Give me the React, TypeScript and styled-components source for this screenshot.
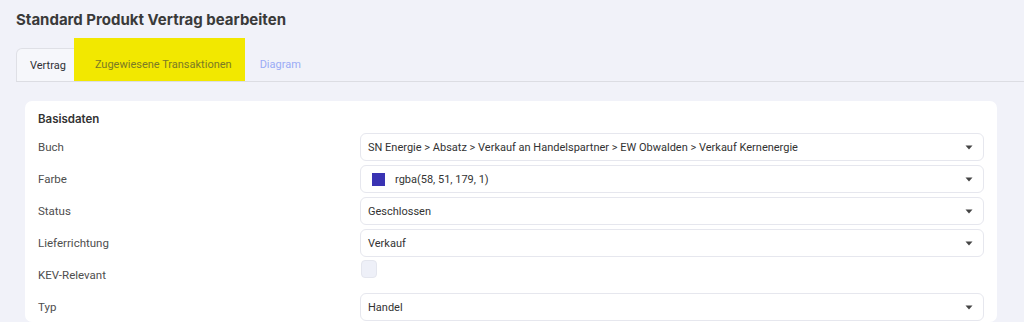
import styled, { createGlobalStyle } from "styled-components"

const GlobalStyle = createGlobalStyle`
 html, body {
    margin: 0;
    padding: 0;
    background: #f1f2f9;
 }
 body {
    font-family: "Inter", "Noto Sans", sans-serif;
    color: #3b3b3b;
 }
`

type Field = {
    label: string
    kind: "select" | "checkbox"
    value?: string
    swatch?: string
}

const fields: Field[] = [
    { label: "Buch", kind: "select", value: "SN Energie > Absatz > Verkauf an Handelspartner > EW Obwalden > Verkauf Kernenergie" },
    { label: "Farbe", kind: "select", value: "rgba(58, 51, 179, 1)", swatch: "rgba(58, 51, 179, 1)" },
    { label: "Status", kind: "select", value: "Geschlossen" },
    { label: "Lieferrichtung", kind: "select", value: "Verkauf" },
    { label: "KEV-Relevant", kind: "checkbox" },
    { label: "Typ", kind: "select", value: "Handel" },
]

const tabs = [
    { name: "Vertrag", state: "active" },
    { name: "Zugewiesene Transaktionen", state: "marked" },
    { name: "Diagram", state: "idle" },
] as const

const Caret = () => (
    <svg width="8" height="5" viewBox="0 0 8 5">
        <path d="M0.5 0.5 L7.5 0.5 L4 4.5 Z" fill="#444" />
    </svg>
)

const App = () => {
    return (
        <Page>
            <GlobalStyle />
            <Title>Standard Produkt Vertrag bearbeiten</Title>
            <TabBar>
                {tabs.map(tab => (
                    <Tab key={tab.name} $state={tab.state}>{tab.name}</Tab>
                ))}
            </TabBar>
            <Card>
                <SectionTitle>Basisdaten</SectionTitle>
                <Rows>
                    {fields.map(field => (
                        <Row key={field.label}>
                            <Label>{field.label}</Label>
                            {field.kind === "select" ? (
                                <Select>
                                    {field.swatch && <Swatch $color={field.swatch} />}
                                    <SelectText>{field.value}</SelectText>
                                    <Caret />
                                </Select>
                            ) : (
                                <Checkbox />
                            )}
                        </Row>
                    ))}
                </Rows>
            </Card>
        </Page>
    )
}

export default App

const Page = styled.div`
 display: flex;
 flex-direction: column;
 padding: 11px 27px 0 16px;
 height: 322px;
 box-sizing: border-box;
 overflow: hidden;
`

const Title = styled.div`
 font-size: 15px;
 font-weight: 650;
 color: #3a3a3a;
 line-height: 18px;
`

const TabBar = styled.div`
 display: flex;
 align-items: flex-end;
 margin-top: 9px;
 margin-right: -27px;
 border-bottom: 1px solid #dcdde3;
`

const Tab = styled.div<{ $state: "active" | "marked" | "idle" }>`
 font-family: "Roboto", sans-serif;
 font-size: 11px;
 height: ${p => (p.$state === "marked" ? "43px" : "33px")};
 box-sizing: border-box;
 display: flex;
 align-items: center;
 padding: ${p => (p.$state === "marked" ? "10px 13px 0 21px" : "0 13px")};
 color: ${p => (p.$state === "active" ? "#2f2f35" : p.$state === "marked" ? "#7a7a25" : "#9aabf6")};
 background: ${p => (p.$state === "active" ? "#f6f7fb" : p.$state === "marked" ? "#f2e800" : "transparent")};
 border: ${p => (p.$state === "active" ? "1px solid #dfe0e6" : "none")};
 border-bottom: none;
 border-radius: ${p => (p.$state === "active" ? "6px 6px 0 0" : "0")};
 margin-left: ${p => (p.$state === "marked" ? "-6px" : "0")};
 margin-right: ${p => (p.$state === "marked" ? "2px" : "0")};
`

const Card = styled.div`
 margin: 19px 0 0 9px;
 background: #ffffff;
 border-radius: 7px;
 padding: 10px 13px 0 13px;
 display: flex;
 flex-direction: column;
 flex: 1;
`

const SectionTitle = styled.div`
 font-size: 11.5px;
 font-weight: 600;
 color: #333;
 line-height: 16px;
 margin-bottom: 6px;
`

const Rows = styled.div`
 display: flex;
 flex-direction: column;
 gap: 4px;
`

const Row = styled.div`
 display: flex;
 align-items: center;
 min-height: 28px;
`

const Label = styled.div`
 width: 322px;
 flex-shrink: 0;
 font-family: "Roboto", sans-serif;
 font-size: 11.5px;
 color: #4e4e4e;
`

const Select = styled.div`
 flex: 1;
 height: 28px;
 box-sizing: border-box;
 border: 1px solid #e6e7ee;
 border-radius: 6px;
 display: flex;
 align-items: center;
 padding: 0 10px 0 7px;
 font-family: "Roboto", sans-serif;
 font-size: 11px;
 color: #333;
`

const SelectText = styled.div`
 flex: 1;
`

const Swatch = styled.div<{ $color: string }>`
 width: 13px;
 height: 13px;
 background: ${p => p.$color};
 margin: 0 10px 0 4px;
`

const Checkbox = styled.div`
 align-self: flex-start;
 margin-top: -1px;
 width: 16px;
 height: 18px;
 border-radius: 4px;
 background: #eef0f8;
 border: 1px solid #e4e6ee;
 box-sizing: border-box;
 margin-left: 1px;
`
